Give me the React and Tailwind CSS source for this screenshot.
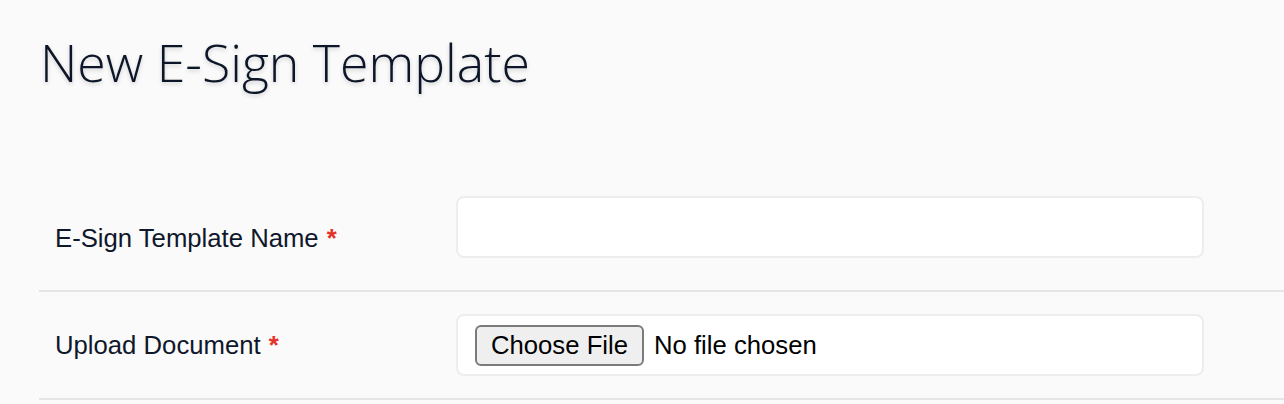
import { useState } from 'react';

const FieldRow = ({ label, required, className = '', children }) => (
  <div className={`flex items-center border-b-2 border-[#e5e5e5] ${className}`}>
    <div className="w-[417px] shrink-0 pl-[16px] text-[25.7px] text-[#0f172a]">
      {label}
      {required && <span className="ml-[8px] font-bold text-[#e53228]">*</span>}
    </div>
    {children}
  </div>
);

const App = () => {
  const [name, setName] = useState('');

  return (
    <div className="min-h-screen bg-[#fafafa] font-['Liberation_Sans',Arial,sans-serif]">
      <h1 className="pl-[40px] pt-[36px] font-['Open_Sans',sans-serif] text-[51.8px] font-light leading-[52px] text-[#0d1628] [text-shadow:0_2px_4px_rgba(0,0,0,0.18)]">
        New E-Sign Template
      </h1>

      <form className="ml-[39px] mt-[98px]">
        <FieldRow label="E-Sign Template Name" required>
          <div className="pt-[10px] pb-[32px]">
            <input
              type="text"
              value={name}
              onChange={(e) => setName(e.target.value)}
              className="h-[62px] w-[748px] rounded-[8px] border-2 border-[#ededed] bg-white px-[16px] text-[25.7px] outline-none"
            />
          </div>
        </FieldRow>

        <FieldRow label="Upload Document" required>
          <div className="py-[22px]">
            <label className="flex h-[62px] w-[748px] cursor-pointer items-center rounded-[8px] border-2 border-[#ededed] bg-white pl-[17px] text-[25.7px] text-black">
              <span className="flex h-[41px] w-[169px] items-center justify-center rounded-[6px] border-2 border-[#7b7b7b] bg-[#efefef]">
                Choose File
              </span>
              <span className="ml-[10px]">No file chosen</span>
              <input type="file" className="hidden" />
            </label>
          </div>
        </FieldRow>
      </form>
    </div>
  );
};

export default App;
